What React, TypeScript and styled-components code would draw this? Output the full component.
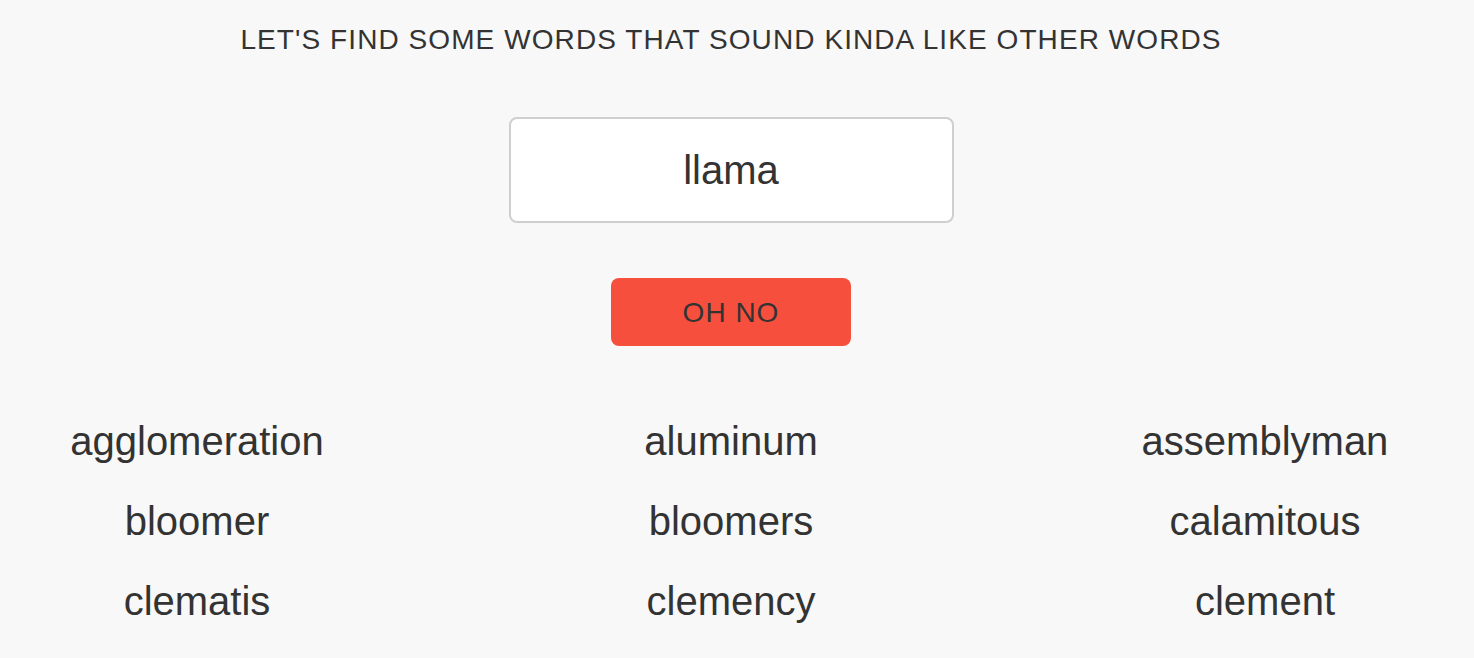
import React, { useState } from "react";
import styled, { createGlobalStyle } from "styled-components";

const GlobalStyle = createGlobalStyle`
  html, body {
    margin: 0;
    padding: 0;
    background: #f8f8f8;
  }
  body {
    font-family: "Liberation Sans", Arial, Helvetica, sans-serif;
    color: #333333;
  }
`;

const Page = styled.main`
  display: flex;
  flex-direction: column;
  align-items: center;
  padding: 26px 12px 0 0;
  box-sizing: border-box;
  width: 100%;
`;

const Heading = styled.h1`
  margin: 0;
  font-size: 28px;
  line-height: 28px;
  font-weight: 400;
  letter-spacing: 1.08px;
  text-transform: uppercase;
  color: #333333;
`;

const WordInput = styled.input`
  margin-top: 63px;
  width: 445px;
  height: 106px;
  box-sizing: border-box;
  border: 2px solid #cfcfcf;
  border-radius: 8px;
  background: #ffffff;
  font-family: inherit;
  font-size: 40px;
  color: #333333;
  text-align: center;
  outline: none;
  padding: 0;
`;

const Button = styled.button`
  margin-top: 55px;
  width: 240px;
  height: 68px;
  border: none;
  border-radius: 8px;
  background: #f74f3d;
  color: #333333;
  font-family: inherit;
  font-size: 28px;
  letter-spacing: 1px;
  cursor: pointer;
  padding: 2px 0 0 0;
`;

const Results = styled.ul`
  list-style: none;
  margin: 55px 0 0 0;
  padding: 0;
  display: grid;
  grid-template-columns: repeat(3, 400px);
  column-gap: 134px;
  justify-content: center;
`;

const Word = styled.li`
  font-size: 40px;
  line-height: 80px;
  text-align: center;
  color: #333333;
`;

const words = [
  "agglomeration",
  "aluminum",
  "assemblyman",
  "bloomer",
  "bloomers",
  "calamitous",
  "clematis",
  "clemency",
  "clement",
];

export default function App() {
  const [value, setValue] = useState("llama");
  return (
    <>
      <GlobalStyle />
      <Page>
        <Heading>Let's find some words that sound kinda like other words</Heading>
        <WordInput value={value} onChange={(e) => setValue(e.target.value)} />
        <Button type="button">OH NO</Button>
        <Results>
          {words.map((w) => (
            <Word key={w}>{w}</Word>
          ))}
        </Results>
      </Page>
    </>
  );
}
